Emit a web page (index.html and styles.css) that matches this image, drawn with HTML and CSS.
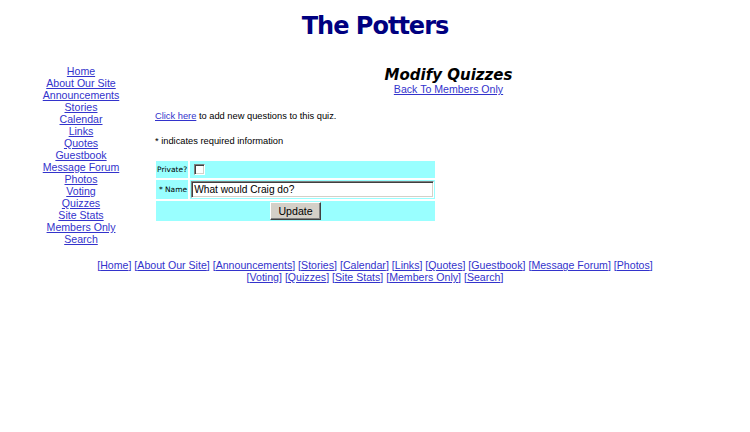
FILE: index.html
```html
<!DOCTYPE html>
<html>
<head>
<meta charset="utf-8">
<title>The Potters</title>
<link rel="stylesheet" href="styles.css">
</head>
<body>
<div class="header"><h1 class="site-title">The Potters</h1></div>
<div class="layout">
  <nav class="sidebar">
    <a href="#">Home</a>
    <a href="#">About Our Site</a>
    <a href="#">Announcements</a>
    <a href="#">Stories</a>
    <a href="#">Calendar</a>
    <a href="#">Links</a>
    <a href="#">Quotes</a>
    <a href="#">Guestbook</a>
    <a href="#">Message Forum</a>
    <a href="#">Photos</a>
    <a href="#">Voting</a>
    <a href="#">Quizzes</a>
    <a href="#">Site Stats</a>
    <a href="#">Members Only</a>
    <a href="#">Search</a>
  </nav>
  <main class="main">
    <div class="page-head">
      <h2 class="page-title">Modify Quizzes</h2>
      <a class="back" href="#">Back To Members Only</a>
    </div>
    <p class="note note-first"><a href="#">Click here</a> to add new questions to this quiz.</p>
    <p class="note note-second">* indicates required information</p>
    <table class="form-table">
      <tr class="row-private">
        <td class="label">Private?</td>
        <td class="field"><input class="check" type="checkbox"></td>
      </tr>
      <tr class="row-name">
        <td class="label">* Name</td>
        <td class="field"><input class="text" type="text" value="What would Craig do?"></td>
      </tr>
      <tr class="row-submit">
        <td class="submit" colspan="2"><button class="btn" type="button">Update</button></td>
      </tr>
    </table>
  </main>
</div>
<div class="footer">
  <div class="footer-line">[<a href="#">Home</a>] [<a href="#">About Our Site</a>] [<a href="#">Announcements</a>] [<a href="#">Stories</a>] [<a href="#">Calendar</a>] [<a href="#">Links</a>] [<a href="#">Quotes</a>] [<a href="#">Guestbook</a>] [<a href="#">Message Forum</a>] [<a href="#">Photos</a>]</div>
  <div class="footer-line">[<a href="#">Voting</a>] [<a href="#">Quizzes</a>] [<a href="#">Site Stats</a>] [<a href="#">Members Only</a>] [<a href="#">Search</a>]</div>
</div>
</body>
</html>
```
FILE: styles.css
```css
html, body {
  margin: 0;
  padding: 0;
  background: #ffffff;
}
body {
  padding: 0 8px;
  font-family: "Liberation Sans", Arial, sans-serif;
  color: #000000;
}
a {
  color: #3333cc;
  text-decoration: underline;
}
.header {
  padding-top: 11px;
  text-align: center;
}
.site-title {
  margin: 0;
  font-family: "DejaVu Sans", Verdana, sans-serif;
  font-weight: bold;
  font-size: 24px;
  line-height: 30px;
  letter-spacing: -1px;
  color: #000080;
}
.layout {
  display: flex;
  margin-top: 24px;
}
.sidebar {
  width: 146px;
  flex: none;
  display: flex;
  flex-direction: column;
  align-items: center;
  font-size: 10.6px;
  line-height: 12px;
}
.main {
  flex: 1;
  padding-left: 1px;
}
.page-head {
  text-align: center;
  font-size: 10.6px;
  line-height: 12px;
}
.page-title {
  margin: 0;
  padding-top: 2px;
  font-family: "DejaVu Sans", Verdana, sans-serif;
  font-weight: bold;
  font-style: italic;
  font-size: 15px;
  line-height: 16px;
}
.back {
  font-size: 10.6px;
  line-height: 12px;
}
.note {
  margin: 0;
  font-size: 9.3px;
  line-height: 12px;
}
.note-first {
  margin-top: 15px;
}
.note-second {
  margin-top: 13px;
}
.form-table {
  margin-top: 12px;
  margin-left: -1px;
  border-collapse: separate;
  border-spacing: 2px;
  width: 282px;
  font-size: 10px;
  line-height: 12px;
}
.form-table td {
  background: #99ffff;
  padding: 0 1px;
  vertical-align: middle;
}
.label {
  width: 29px;
  font-family: "DejaVu Sans", Verdana, sans-serif;
  font-size: 7.5px;
  text-align: right;
  white-space: nowrap;
}
.row-private td { height: 17px; }
.row-name td { height: 19px; }
.row-submit td { height: 20px; }
.check {
  appearance: none;
  -webkit-appearance: none;
  box-sizing: border-box;
  display: block;
  margin: 0 0 0 3px;
  width: 11px;
  height: 11px;
  background: #ffffff;
  border-top: 1px solid #808080;
  border-left: 1px solid #808080;
  border-right: 1px solid #ffffff;
  border-bottom: 1px solid #ffffff;
  box-shadow: inset 1px 1px 0 #404040, inset -1px -1px 0 #d4d0c8;
}
.text {
  box-sizing: border-box;
  display: block;
  width: 243px;
  height: 17px;
  margin: 0;
  padding: 0 2px;
  border-top: 1px solid #808080;
  border-left: 1px solid #808080;
  border-right: 1px solid #ffffff;
  border-bottom: 1px solid #ffffff;
  box-shadow: inset 1px 1px 0 #404040, inset -1px -1px 0 #d4d0c8;
  font-family: "Liberation Sans", Arial, sans-serif;
  font-size: 10.2px;
  color: #000000;
  background: #ffffff;
}
.submit {
  text-align: center;
}
.btn {
  box-sizing: border-box;
  width: 51px;
  height: 18px;
  margin: 0;
  padding: 0;
  background: #d4d0c8;
  border-top: 1px solid #ffffff;
  border-left: 1px solid #ffffff;
  border-right: 1px solid #404040;
  border-bottom: 1px solid #404040;
  box-shadow: inset -1px -1px 0 #808080;
  font-family: "Liberation Sans", Arial, sans-serif;
  font-size: 10.6px;
  color: #000000;
  vertical-align: middle;
}
.footer {
  margin-top: 14px;
  text-align: center;
  font-size: 10.6px;
  line-height: 12px;
  color: #3333cc;
}
```
